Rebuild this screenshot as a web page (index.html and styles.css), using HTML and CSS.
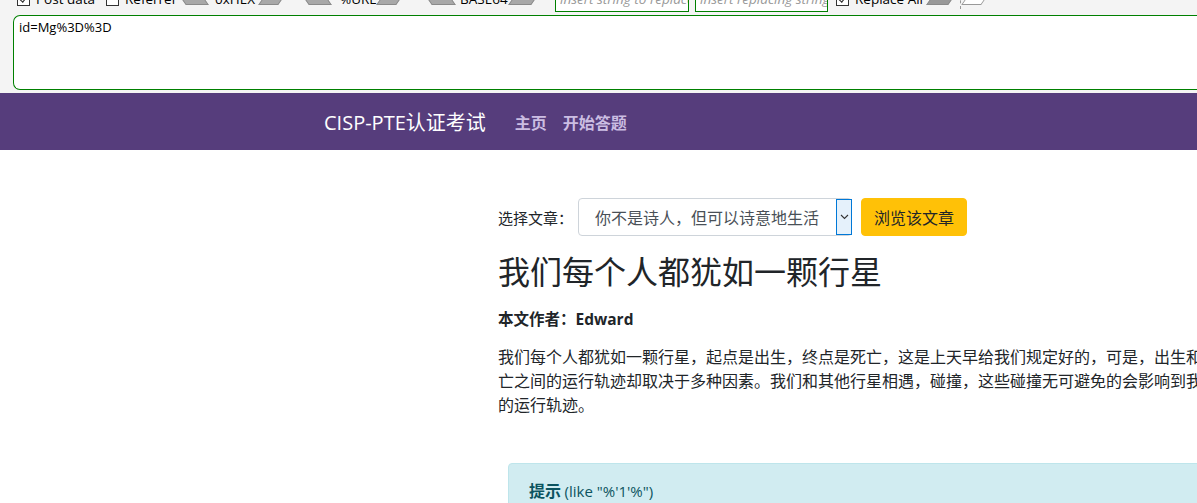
FILE: index.html
```html
<!DOCTYPE html>
<html lang="zh">
<head>
<meta charset="utf-8">
<title>CISP-PTE认证考试</title>
<link rel="stylesheet" href="styles.css">
</head>
<body>
<div class="hackbar">
  <div class="toolbar">
    <div class="tb-row">
      <span class="cb checked first"></span><span class="tb-label w-post">Post data</span>
      <span class="cb"></span><span class="tb-label w-ref">Referrer</span>
      <span class="arrow left a23"></span><span class="tb-label w-hex">0xHEX</span><span class="arrow right a20"></span>
      <span class="arrow left a23 gap23"></span><span class="tb-label w-url">%URL</span><span class="arrow right a20"></span>
      <span class="arrow left a24 gap28"></span><span class="tb-label w-b64">BASE64</span><span class="arrow right a23"></span>
      <span class="tb-input in1">insert string to replace</span>
      <span class="tb-input in2">insert replacing string</span>
      <span class="cb checked cb3"></span><span class="tb-label w-all">Replace All</span>
      <span class="arrow right dark a22"></span>
      <span class="sep"></span>
      <span class="arrow right white a20"></span>
    </div>
  </div>
  <div class="post-area">id=Mg%3D%3D</div>
</div>

<nav class="navbar">
  <span class="brand">CISP-PTE认证考试</span>
  <a class="nav-link">主页</a>
  <a class="nav-link">开始答题</a>
</nav>

<main class="content">
  <form class="select-row">
    <label class="sel-label">选择文章：</label>
    <div class="select">
      <span class="select-text">你不是诗人，但可以诗意地生活</span>
      <span class="select-btn"><svg width="9" height="6" viewBox="0 0 9 6"><path d="M1 1 L4.5 4.5 L8 1" fill="none" stroke="#333" stroke-width="1.1"/></svg></span>
    </div>
    <button type="button" class="btn-warning">浏览该文章</button>
  </form>
  <h1 class="title">我们每个人都犹如一颗行星</h1>
  <p class="author">本文作者：Edward</p>
  <p class="body-text">我们每个人都犹如一颗行星，起点是出生，终点是死亡，这是上天早给我们规定好的，可是，出生和死亡之间的运行轨迹却取决于多种因素。我们和其他行星相遇，碰撞，这些碰撞无可避免的会影响到我们的运行轨迹。</p>
  <div class="alert-info"><b>提示</b> <span class="hint">(like "%'1'%")</span></div>
</main>
</body>
</html>
```

FILE: styles.css
```css
html, body {
  margin: 0;
  padding: 0;
  background: #fff;
  overflow: hidden;
  width: 1197px;
  height: 503px;
}
body {
  font-family: "Noto Sans CJK SC", "Noto Sans", sans-serif;
  color: #212529;
}
.hackbar {
  background: #f4f4f4;
  height: 93px;
  overflow: hidden;
}
.toolbar {
  height: 15px;
  overflow: hidden;
}
.tb-row {
  display: flex;
  align-items: center;
  height: 20px;
  margin-top: -11px;
  font-family: "Open Sans", "Liberation Sans", sans-serif;
  font-size: 13.5px;
  color: #000;
  white-space: nowrap;
}
.tb-row > span { flex: none; box-sizing: border-box; }
.cb {
  width: 13px;
  height: 13px;
  border: 1px solid #333;
  background: #fff;
  margin-right: 6px;
  position: relative;
}
.cb.checked::after {
  content: "";
  position: absolute;
  left: 3px;
  top: 0px;
  width: 4px;
  height: 7px;
  border-right: 1.3px solid #222;
  border-bottom: 1.3px solid #222;
  transform: rotate(40deg);
}
.cb.first { margin-left: 17px; }
.cb.cb3 { margin-left: 8px; }
.tb-label { overflow: hidden; }
.w-post { width: 70px; }
.w-ref { width: 57px; }
.w-hex { width: 47px; margin-left: 10px; }
.w-url { width: 40px; margin-left: 12px; }
.w-b64 { width: 52px; margin-left: 8px; }
.w-all { width: 75px; }
.arrow {
  height: 11px;
  background: #a8a8a8;
  border: 1px solid #8a8a8a;
  transform: skewX(-35deg);
}
.a20 { width: 20px; }
.a22 { width: 22px; }
.a23 { width: 23px; }
.a24 { width: 24px; }
.arrow.left { transform: skewX(35deg); }
.arrow.gap23 { margin-left: 23px; }
.arrow.gap28 { margin-left: 28px; }
.arrow.dark { background: #999; }
.arrow.white { background: #fff; border: 1px solid #999; margin-left: 4px; }
.sep {
  width: 1px;
  height: 20px;
  border-left: 1px dashed #999;
  margin-left: 8px;
}
.tb-input {
  height: 23px;
  border: 1px solid #008000;
  background: #fff;
  color: #999;
  font-style: italic;
  padding: 0 4px 5px;
  line-height: 14px;
  overflow: hidden;
  display: flex;
  align-items: flex-end;
  margin-top: 2px;
}
.tb-input.in1 { width: 134px; margin-left: 20px; }
.tb-input.in2 { width: 133px; margin-left: 6px; }
.post-area {
  margin-left: 13px;
  height: 75px;
  border: 1px solid #008000;
  border-right: none;
  border-radius: 7px 0 0 7px;
  background: #fff;
  font-family: "Open Sans", "Liberation Sans", sans-serif;
  font-size: 13px;
  color: #000;
  padding: 2px 0 0 5px;
  box-sizing: border-box;
  line-height: 18px;
}
.navbar {
  background: #563d7c;
  height: 57px;
  display: flex;
  align-items: center;
  padding-left: 324px;
}
.brand {
  color: #fff;
  font-size: 20px;
  margin-right: 29px;
  font-family: "Open Sans", "Noto Sans CJK SC", sans-serif;
}
.nav-link {
  color: #cbbde2;
  font-weight: bold;
  font-size: 16px;
  margin-right: 16px;
}
.content {
  padding-left: 498px;
  padding-top: 48px;
  width: 760px;
}
.select-row {
  display: flex;
  align-items: center;
  margin: 0;
  height: 38px;
}
.sel-label {
  font-size: 15px;
  margin-right: 5px;
}
.select {
  width: 274px;
  height: 38px;
  border: 1px solid #ced4da;
  border-radius: 4px;
  box-sizing: border-box;
  display: flex;
  align-items: center;
  justify-content: space-between;
  background: #fff;
}
.select-text {
  color: #495057;
  font-size: 16px;
  padding-left: 16px;
}
.select-btn {
  width: 16px;
  height: 36px;
  border: 1px solid #0078d7;
  background: #e5f1fb;
  box-sizing: border-box;
  display: flex;
  align-items: center;
  justify-content: center;
  margin-right: -1px;
}
.btn-warning {
  margin-left: 9px;
  width: 106px;
  height: 38px;
  background: #ffc107;
  border: 1px solid #ffc107;
  border-radius: 4px;
  font-family: inherit;
  font-size: 16px;
  color: #212529;
  padding: 0;
}
.title {
  font-size: 32px;
  font-weight: 400;
  margin: 11px 0 0;
  line-height: 46px;
}
.author {
  font-weight: bold;
  font-size: 15.5px;
  margin: 14px 0 0;
  line-height: 24px;
  font-family: "Open Sans", "Noto Sans CJK SC", sans-serif;
}
.body-text {
  font-size: 16px;
  line-height: 24px;
  margin: 13px 0 0;
  width: 720px;
}
.alert-info {
  margin: 47px 0 0 10px;
  background: #d1ecf1;
  border: 1px solid #bee5eb;
  border-radius: 4px;
  color: #0c5460;
  padding: 14px 20px;
  font-size: 16px;
  width: 700px;
}
.hint {
  font-family: "Liberation Sans Narrow", "Open Sans", sans-serif;
  font-size: 15px;
}
```
